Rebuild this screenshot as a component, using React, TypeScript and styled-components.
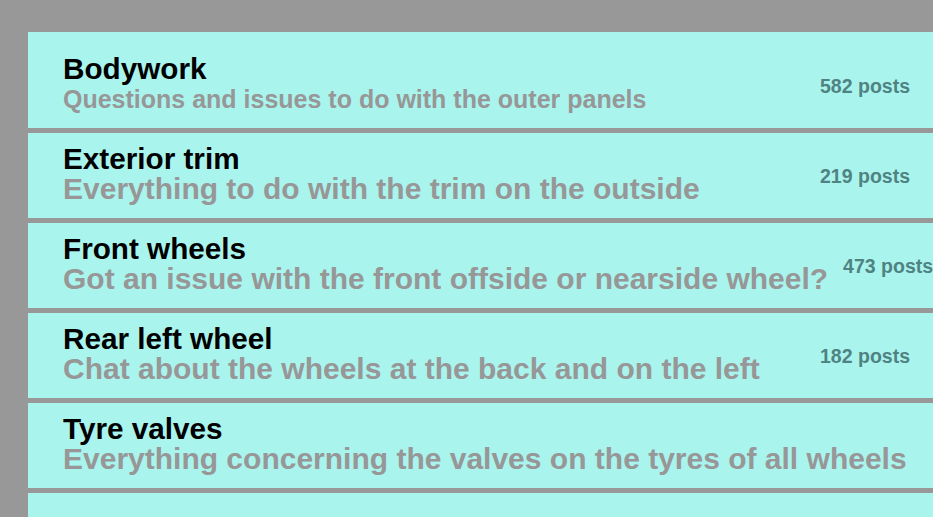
import React from "react";
import styled, { createGlobalStyle } from "styled-components";

const Global = createGlobalStyle`
  html, body {
    margin: 0;
    padding: 0;
    background: #989898;
    overflow: hidden;
  }
  body {
    font-family: "Liberation Sans", Arial, sans-serif;
  }
`;

const Page = styled.div`
  width: 933px;
  height: 517px;
  padding: 32px 0 0 28px;
  box-sizing: border-box;
  overflow: hidden;
`;

const Board = styled.div`
  display: flex;
  flex-direction: column;
  gap: 5px;
  background: #989898;
`;

const Row = styled.div<{ first?: boolean }>`
  display: flex;
  align-items: center;
  flex-wrap: nowrap;
  box-sizing: border-box;
  padding: ${(p) => (p.first ? "11px" : "0")} 23px 4px 35px;
  height: ${(p) => (p.first ? "96px" : "85px")};
  background: #aaf4ee;
`;

const Text = styled.div`
  display: flex;
  flex-direction: column;
  flex: 0 0 auto;
  white-space: nowrap;
`;

const Title = styled.div`
  font-weight: 700;
  font-size: 29.7px;
  line-height: 30px;
  color: #000;
`;

const Desc = styled.div<{ small?: boolean }>`
  font-weight: 700;
  font-size: ${(p) => (p.small ? "25px" : "30px")};
  line-height: 30px;
  color: #979797;
`;

const Count = styled.div`
  flex: 0 0 auto;
  margin-left: auto;
  padding: 5px 0 0 15px;
  font-weight: 700;
  font-size: 19.5px;
  line-height: 22px;
  color: #4f8382;
  white-space: nowrap;
`;

const forums = [
  { title: "Bodywork", desc: "Questions and issues to do with the outer panels", posts: 582, small: true },
  { title: "Exterior trim", desc: "Everything to do with the trim on the outside", posts: 219 },
  { title: "Front wheels", desc: "Got an issue with the front offside or nearside wheel?", posts: 473 },
  { title: "Rear left wheel", desc: "Chat about the wheels at the back and on the left", posts: 182 },
  { title: "Tyre valves", desc: "Everything concerning the valves on the tyres of all wheels" },
];

export default function App() {
  return (
    <>
      <Global />
      <Page>
        <Board>
          {forums.map((f, i) => (
            <Row key={f.title} first={i === 0}>
              <Text>
                <Title>{f.title}</Title>
                <Desc small={f.small}>{f.desc}</Desc>
              </Text>
              {f.posts !== undefined && <Count>{f.posts} posts</Count>}
            </Row>
          ))}
          <Row />
        </Board>
      </Page>
    </>
  );
}
